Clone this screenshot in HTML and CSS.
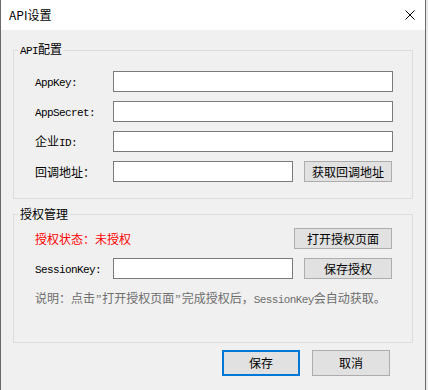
FILE: index.html
```html
<!DOCTYPE html>
<html lang="zh-CN">
<head>
<meta charset="utf-8">
<title>API设置</title>
<link rel="stylesheet" href="styles.css">
</head>
<body>
<div class="window">
  <div class="titlebar">
    <span class="title">API设置</span>
    <svg class="close" width="10" height="10" viewBox="0 0 10 10"><path d="M0.5 0.5 L9.5 9.5 M9.5 0.5 L0.5 9.5" stroke="#000" stroke-width="1" fill="none"/></svg>
  </div>
  <div class="content">
    <fieldset class="group">
      <legend><span class="en">API</span>配置</legend>
      <div class="rows rows1">
        <div class="row"><label class="label"><span class="en">AppKey:</span></label><input class="field wide" type="text"></div>
        <div class="row"><label class="label"><span class="en">AppSecret:</span></label><input class="field wide" type="text"></div>
        <div class="row"><label class="label">企业<span class="en">ID:</span></label><input class="field wide" type="text"></div>
        <div class="row"><label class="label">回调地址：</label><input class="field short" type="text"><button class="btn side">获取回调地址</button></div>
      </div>
    </fieldset>
    <fieldset class="group group2">
      <legend>授权管理</legend>
      <div class="rows rows2">
        <div class="row status-row"><span class="status">授权状态：未授权</span><button class="btn open">打开授权页面</button></div>
        <div class="row"><label class="label"><span class="en">SessionKey:</span></label><input class="field short" type="text"><button class="btn side">保存授权</button></div>
        <p class="note">说明：点击<span class="q">”</span>打开授权页面<span class="q">”</span>完成授权后，<span class="en">SessionKey</span>会自动获取。</p>
      </div>
    </fieldset>
    <div class="actions">
      <button class="btn act primary">保存</button>
      <button class="btn act">取消</button>
    </div>
  </div>
</div>
</body>
</html>
```
FILE: styles.css
```css
* { box-sizing: border-box; }
html, body { margin: 0; padding: 0; }
body {
  width: 428px;
  height: 390px;
  overflow: hidden;
  background: #e9e9e9;
  font-family: "Noto Sans CJK SC", sans-serif;
  font-size: 12px;
  color: #000;
}
.window {
  width: 426px;
  height: 390px;
  background: #f0f0f0;
  border-left: 1px solid #6b6b6b;
  border-right: 1px solid #6b6b6b;
}
.titlebar {
  height: 30px;
  background: #fff;
  display: flex;
  align-items: center;
  justify-content: space-between;
  padding: 0 10px 0 8px;
}
.title { font-size: 12px; line-height: 14px; }
.close { display: block; }
.content { padding: 12px 12px 0 12px; }
.group {
  margin: 0;
  padding: 0;
  width: 400px;
  min-width: 0;
  border: 1px solid #dcdcdc;
}
.group2 { margin-top: 8px; }
legend {
  margin-left: 4px;
  padding: 0 2px;
  line-height: 14px;
  font-size: 12px;
}
.en {
  font-family: "Liberation Mono", monospace;
  font-size: 11px;
  letter-spacing: -0.6px;
}
.q {
  font-family: "Liberation Serif", serif;
  font-size: 12px;
  padding: 0 1px;
}
.rows { display: flex; flex-direction: column; gap: 9px; }
.rows1 { padding: 13px 0 16px 21px; }
.rows2 { padding: 7px 0 35px 21px; }
.row { display: flex; align-items: center; height: 21px; }
.label { width: 78px; flex: none; line-height: 14px; }
.field {
  height: 21px;
  border: 1px solid #7a7a7a;
  background: #fff;
  margin: 0;
  padding: 0 2px;
  outline: none;
}
.wide { width: 280px; }
.short { width: 180px; }
.btn {
  margin: 0;
  padding: 0;
  height: 21px;
  background: #e1e1e1;
  border: 1px solid #adadad;
  font-family: "Noto Sans CJK SC", sans-serif;
  font-size: 12px;
  line-height: 14px;
  color: #000;
}
.side { width: 88px; margin-left: 11px; }
.status-row { justify-content: space-between; width: 357px; }
.status { color: #ff0000; line-height: 14px; }
.open { width: 98px; }
.note {
  margin: 3px 0 0 0;
  color: #6d6d6d;
  line-height: 14px;
  white-space: nowrap;
}
.actions {
  display: flex;
  justify-content: flex-end;
  gap: 12px;
  margin-top: 7px;
  padding-right: 23px;
}
.act { width: 78px; height: 26px; }
.primary { border: 2px solid #0078d7; }
```
